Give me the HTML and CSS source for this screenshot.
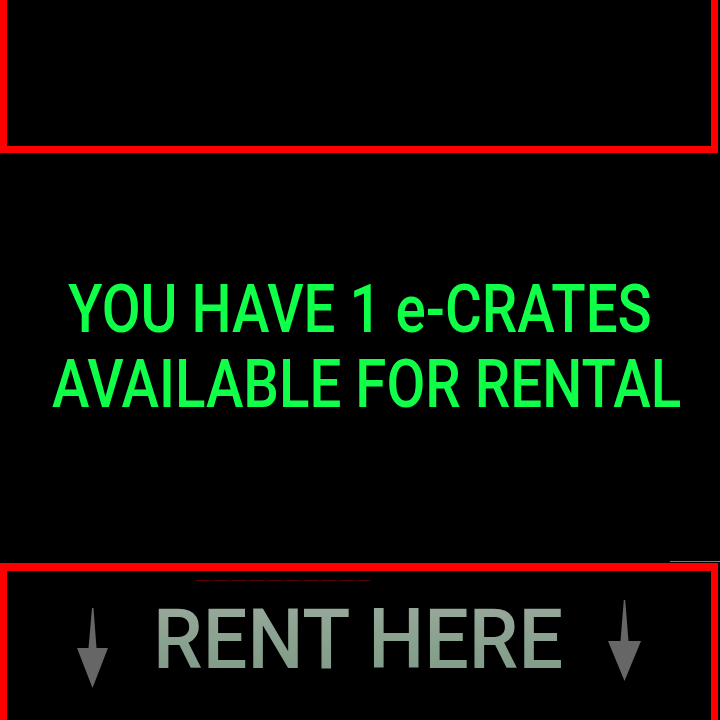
FILE: index.html
```html
<!DOCTYPE html>
<html>
<head>
<meta charset="utf-8">
<link rel="stylesheet" href="styles.css">
</head>
<body>
<div class="screen">
  <div class="top-panel"></div>
  <div class="message">
    <div class="line">YOU HAVE 1 e-CRATES</div>
    <div class="line">AVAILABLE FOR RENTAL</div>
  </div>
  <div class="rule-wrap"><div class="rule"></div></div>
  <div class="rent-panel">
    <div class="dashes"></div>
    <div class="rent-row">
      <svg class="arrow arrow-left" width="31" height="80" viewBox="0 0 31 80">
        <polygon points="15,0 16.5,0 19.5,40 31,40 15.5,80 0,40 11.5,40" fill="#666"/>
      </svg>
      <div class="rent-box"><span class="rent-text">RENT HERE</span></div>
      <svg class="arrow arrow-right" width="33" height="81" viewBox="0 0 33 81">
        <polygon points="15.8,0 17.2,0 20.5,41 33,41 16.5,81 0,41 12.5,41" fill="#666"/>
      </svg>
    </div>
  </div>
</div>
</body>
</html>
```

FILE: styles.css
```css
html, body {
  margin: 0;
  padding: 0;
  background: #000;
}
.screen {
  width: 720px;
  height: 720px;
  overflow: hidden;
  display: flex;
  flex-direction: column;
  background: #000;
}
.top-panel {
  width: 704px;
  height: 146px;
  border: 7px solid #ff0000;
  border-top: none;
  flex: none;
}
.message {
  height: 408px;
  flex: none;
  padding-top: 119px;
  box-sizing: border-box;
  font-family: Roboto, "Liberation Sans", sans-serif;
  font-weight: 500;
  font-size: 66px;
  line-height: 75px;
  color: #10ff48;
  text-align: center;
}
.line {
  white-space: nowrap;
  transform: scaleX(0.855);
  transform-origin: 359px 0;
}
.rule-wrap {
  height: 2px;
  display: flex;
  justify-content: flex-end;
  flex: none;
}
.rule {
  width: 50px;
  height: 1px;
  background: #7a7a7a;
}
.rent-panel {
  flex: none;
  width: 704px;
  height: 200px;
  border: 7px solid #ff0000;
  border-top-width: 8px;
  position: relative;
}
.dashes {
  position: absolute;
  left: 189px;
  top: 9px;
  width: 174px;
  height: 1px;
  background: repeating-linear-gradient(90deg, #5a0000 0 14px, #2a0000 14px 18px);
}
.rent-row {
  display: flex;
  align-items: flex-start;
  padding-left: 70px;
}
.arrow { flex: none; display: block; }
.arrow-left { margin-top: 37px; }
.arrow-right { margin-top: 29px; }
.rent-box {
  width: 405px;
  flex: none;
  margin: 27px 47px 0 48px;
  display: flex;
  justify-content: center;
}
.rent-text {
  display: inline-block;
  flex: none;
  font-family: Roboto, "Liberation Sans", sans-serif;
  font-weight: 500;
  font-size: 84px;
  line-height: 84px;
  white-space: nowrap;
  transform: scaleX(0.94);
  color: #8ca392;
  background: linear-gradient(180deg, #9aa99c 0%, #8aa290 50%, #7d9a85 100%);
  -webkit-background-clip: text;
  background-clip: text;
  -webkit-text-fill-color: transparent;
}
```
